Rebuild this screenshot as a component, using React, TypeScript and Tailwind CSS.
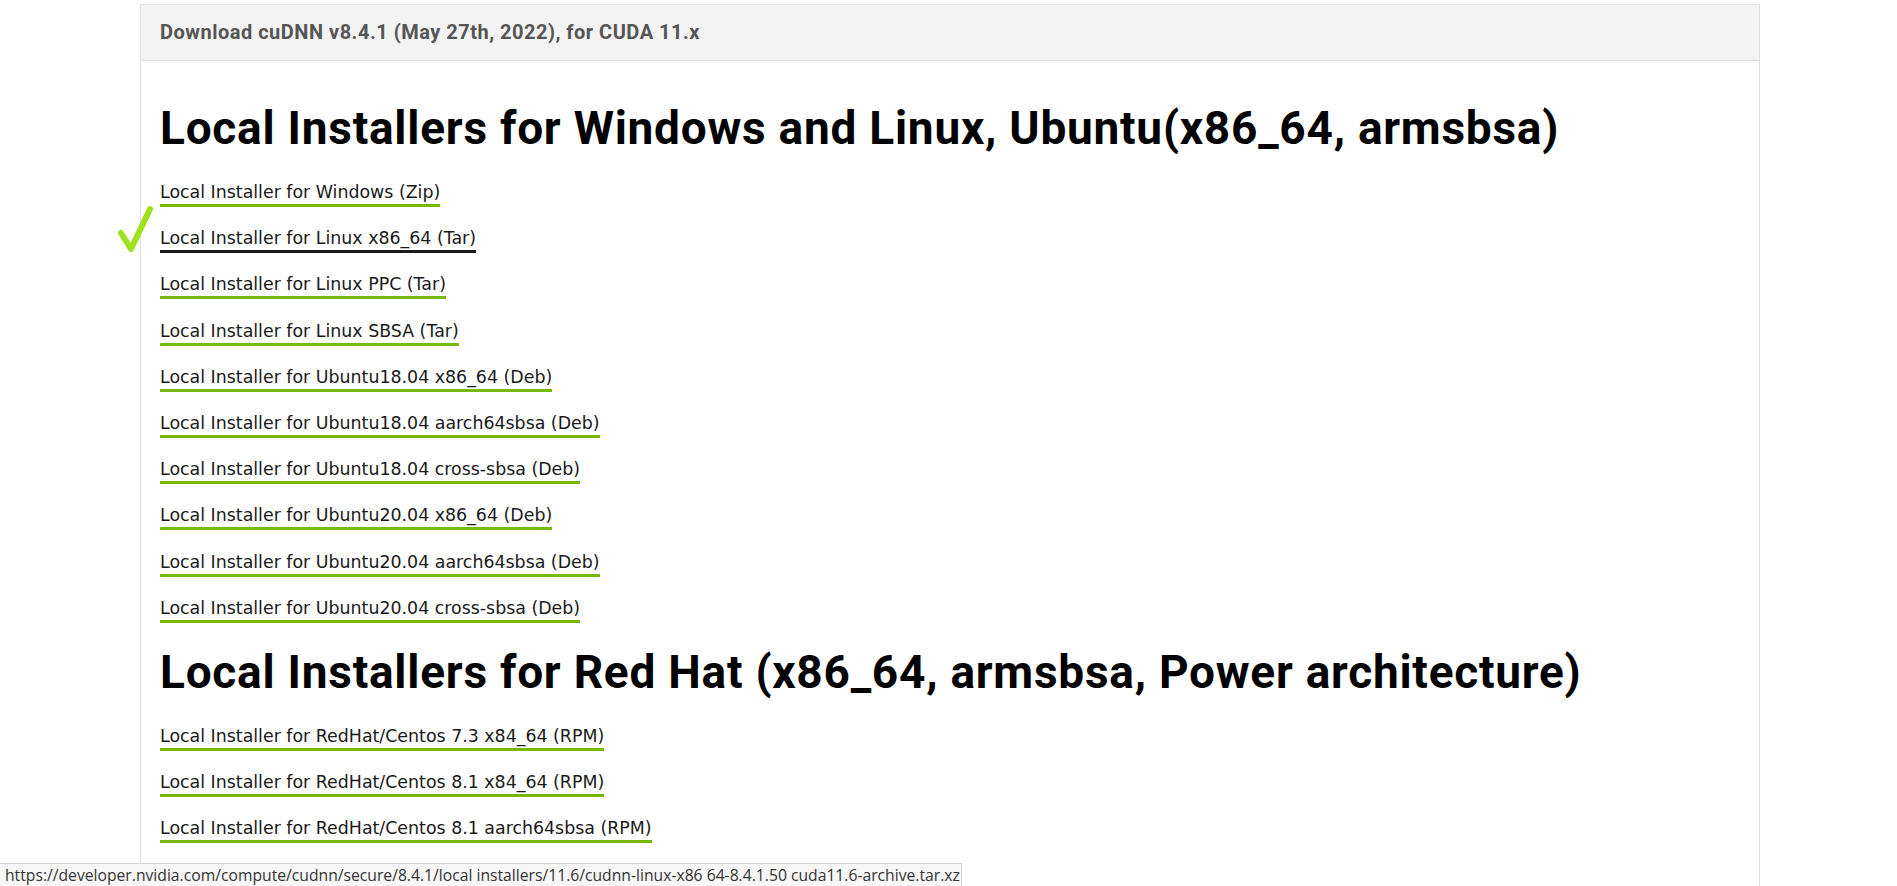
import React from "react";

const windowsLinux = [
  { label: "Local Installer for Windows (Zip)" },
  { label: "Local Installer for Linux x86_64 (Tar)", active: true },
  { label: "Local Installer for Linux PPC (Tar)" },
  { label: "Local Installer for Linux SBSA (Tar)" },
  { label: "Local Installer for Ubuntu18.04 x86_64 (Deb)" },
  { label: "Local Installer for Ubuntu18.04 aarch64sbsa (Deb)" },
  { label: "Local Installer for Ubuntu18.04 cross-sbsa (Deb)" },
  { label: "Local Installer for Ubuntu20.04 x86_64 (Deb)" },
  { label: "Local Installer for Ubuntu20.04 aarch64sbsa (Deb)" },
  { label: "Local Installer for Ubuntu20.04 cross-sbsa (Deb)" },
];

const redHat = [
  { label: "Local Installer for RedHat/Centos 7.3 x84_64 (RPM)" },
  { label: "Local Installer for RedHat/Centos 8.1 x84_64 (RPM)" },
  { label: "Local Installer for RedHat/Centos 8.1 aarch64sbsa (RPM)" },
];

type Item = { label: string; active?: boolean };

function LinkList({ items }: { items: Item[] }) {
  return (
    <div className="flex flex-col items-start gap-[19.2px]">
      {items.map((it) => (
        <a
          key={it.label}
          href="#"
          className={`inline-block border-b-[3px] text-[17.4px] leading-[24px] text-[#1a1a1a] font-['DejaVu_Sans',Verdana,sans-serif] ${
            it.active ? "border-[#1a1a1a]" : "border-[#76b900]"
          }`}
        >
          {it.label}
        </a>
      ))}
    </div>
  );
}

function Heading({ children }: { children: React.ReactNode }) {
  return (
    <h2 className="font-['Roboto',sans-serif] text-[46px] font-bold leading-[56px] tracking-[0.75px] text-black">
      {children}
    </h2>
  );
}

export default function App() {
  return (
    <div className="relative h-[886px] w-full overflow-hidden bg-white">
      <div className="ml-[140px] mt-[4px] h-[900px] w-[1620px] border border-[#e0e0e0]">
        <div className="h-[56px] border-b border-[#e0e0e0] bg-[#f3f3f3] px-[19px] font-['Roboto',sans-serif] text-[20px] font-bold leading-[55px] tracking-[0.5px] text-[#555]">
          Download cuDNN v8.4.1 (May 27th, 2022), for CUDA 11.x
        </div>
        <div className="flex flex-col px-[19px] pt-[39px]">
          <Heading>Local Installers for Windows and Linux, Ubuntu(x86_64, armsbsa)</Heading>
          <div className="mt-[24px]">
            <LinkList items={windowsLinux} />
          </div>
          <div className="mt-[21px]">
            <Heading>Local Installers for Red Hat (x86_64, armsbsa, Power architecture)</Heading>
          </div>
          <div className="mt-[24px]">
            <LinkList items={redHat} />
          </div>
        </div>
      </div>

      {/* checkmark annotation */}
      <svg
        className="absolute left-[117px] top-[205px]"
        width="38"
        height="48"
        viewBox="0 0 38 48"
        fill="none"
      >
        <path
          d="M4 28 L14 44 L33 4"
          stroke="#9fe01f"
          strokeWidth="6"
          strokeLinecap="round"
          strokeLinejoin="round"
        />
      </svg>

      {/* browser status bar */}
      <div className="absolute bottom-0 left-0 h-[23px] w-[962px] overflow-hidden border-r border-t border-[#d6d6d6] bg-[#f7f7f7] pl-[5px] font-['Open_Sans',sans-serif] text-[15.7px] leading-[22px] text-[#333]">
        https://developer.nvidia.com/compute/cudnn/secure/8.4.1/local installers/11.6/cudnn-linux-x86 64-8.4.1.50 cuda11.6-archive.tar.xz
      </div>
    </div>
  );
}
